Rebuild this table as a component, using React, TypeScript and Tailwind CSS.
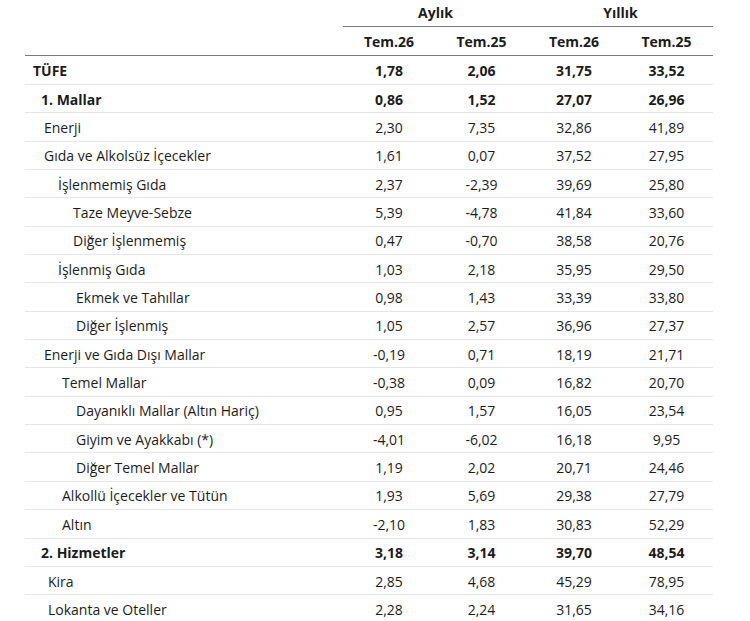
import React from "react";

type Row = {
  label: string;
  indent: string;
  bold?: boolean;
  values: string[];
};

const rows: Row[] = [
  { label: "TÜFE", indent: "pl-[8px]", bold: true, values: ["1,78", "2,06", "31,75", "33,52"] },
  { label: "1. Mallar", indent: "pl-[16px]", bold: true, values: ["0,86", "1,52", "27,07", "26,96"] },
  { label: "Enerji", indent: "pl-[19px]", values: ["2,30", "7,35", "32,86", "41,89"] },
  { label: "Gıda ve Alkolsüz İçecekler", indent: "pl-[19px]", values: ["1,61", "0,07", "37,52", "27,95"] },
  { label: "İşlenmemiş Gıda", indent: "pl-[33px]", values: ["2,37", "-2,39", "39,69", "25,80"] },
  { label: "Taze Meyve-Sebze", indent: "pl-[48px]", values: ["5,39", "-4,78", "41,84", "33,60"] },
  { label: "Diğer İşlenmemiş", indent: "pl-[48px]", values: ["0,47", "-0,70", "38,58", "20,76"] },
  { label: "İşlenmiş Gıda", indent: "pl-[33px]", values: ["1,03", "2,18", "35,95", "29,50"] },
  { label: "Ekmek ve Tahıllar", indent: "pl-[51px]", values: ["0,98", "1,43", "33,39", "33,80"] },
  { label: "Diğer İşlenmiş", indent: "pl-[51px]", values: ["1,05", "2,57", "36,96", "27,37"] },
  { label: "Enerji ve Gıda Dışı Mallar", indent: "pl-[19px]", values: ["-0,19", "0,71", "18,19", "21,71"] },
  { label: "Temel Mallar", indent: "pl-[37px]", values: ["-0,38", "0,09", "16,82", "20,70"] },
  { label: "Dayanıklı Mallar (Altın Hariç)", indent: "pl-[51px]", values: ["0,95", "1,57", "16,05", "23,54"] },
  { label: "Giyim ve Ayakkabı (*)", indent: "pl-[51px]", values: ["-4,01", "-6,02", "16,18", "9,95"] },
  { label: "Diğer Temel Mallar", indent: "pl-[51px]", values: ["1,19", "2,02", "20,71", "24,46"] },
  { label: "Alkollü İçecekler ve Tütün", indent: "pl-[37px]", values: ["1,93", "5,69", "29,38", "27,79"] },
  { label: "Altın", indent: "pl-[37px]", values: ["-2,10", "1,83", "30,83", "52,29"] },
  { label: "2. Hizmetler", indent: "pl-[16px]", bold: true, values: ["3,18", "3,14", "39,70", "48,54"] },
  { label: "Kira", indent: "pl-[23px]", values: ["2,85", "4,68", "45,29", "78,95"] },
  { label: "Lokanta ve Oteller", indent: "pl-[23px]", values: ["2,28", "2,24", "31,65", "34,16"] },
];

const cols = "grid grid-cols-[318px_92px_93px_92px_93px]";

export default function App() {
  return (
    <div className="min-h-screen bg-white text-[#1c1c1c] text-[14px] leading-[21px] font-['Open_Sans','Liberation_Sans',sans-serif] pl-[25px]">
      <div className="w-[688px]">
        {/* group headers */}
        <div className={`${cols} h-[27px] items-center`}>
          <div />
          <div className="col-span-2 h-full flex items-center justify-center pb-[1px] font-bold border-b border-[#7a7a7a]">
            Aylık
          </div>
          <div className="col-span-2 h-full flex items-center justify-center pb-[1px] font-bold border-b border-[#7a7a7a]">
            Yıllık
          </div>
        </div>

        {/* period headers */}
        <div className={`${cols} h-[29px] items-center font-bold border-b border-[#7a7a7a]`}>
          <div />
          <div className="text-center">Tem.26</div>
          <div className="text-center">Tem.25</div>
          <div className="text-center">Tem.26</div>
          <div className="text-center">Tem.25</div>
        </div>

        {rows.map((r, idx) => (
          <div
            key={r.label}
            className={`${cols} ${idx === 0 ? "h-[29px]" : "h-[28.35px]"} pt-[1px] items-center border-b border-[#e6e6e6] ${r.bold ? "font-bold" : ""}`}
          >
            <div className={r.indent}>{r.label}</div>
            {r.values.map((v, i) => (
              <div key={i} className="text-center">
                {v}
              </div>
            ))}
          </div>
        ))}
      </div>
    </div>
  );
}
